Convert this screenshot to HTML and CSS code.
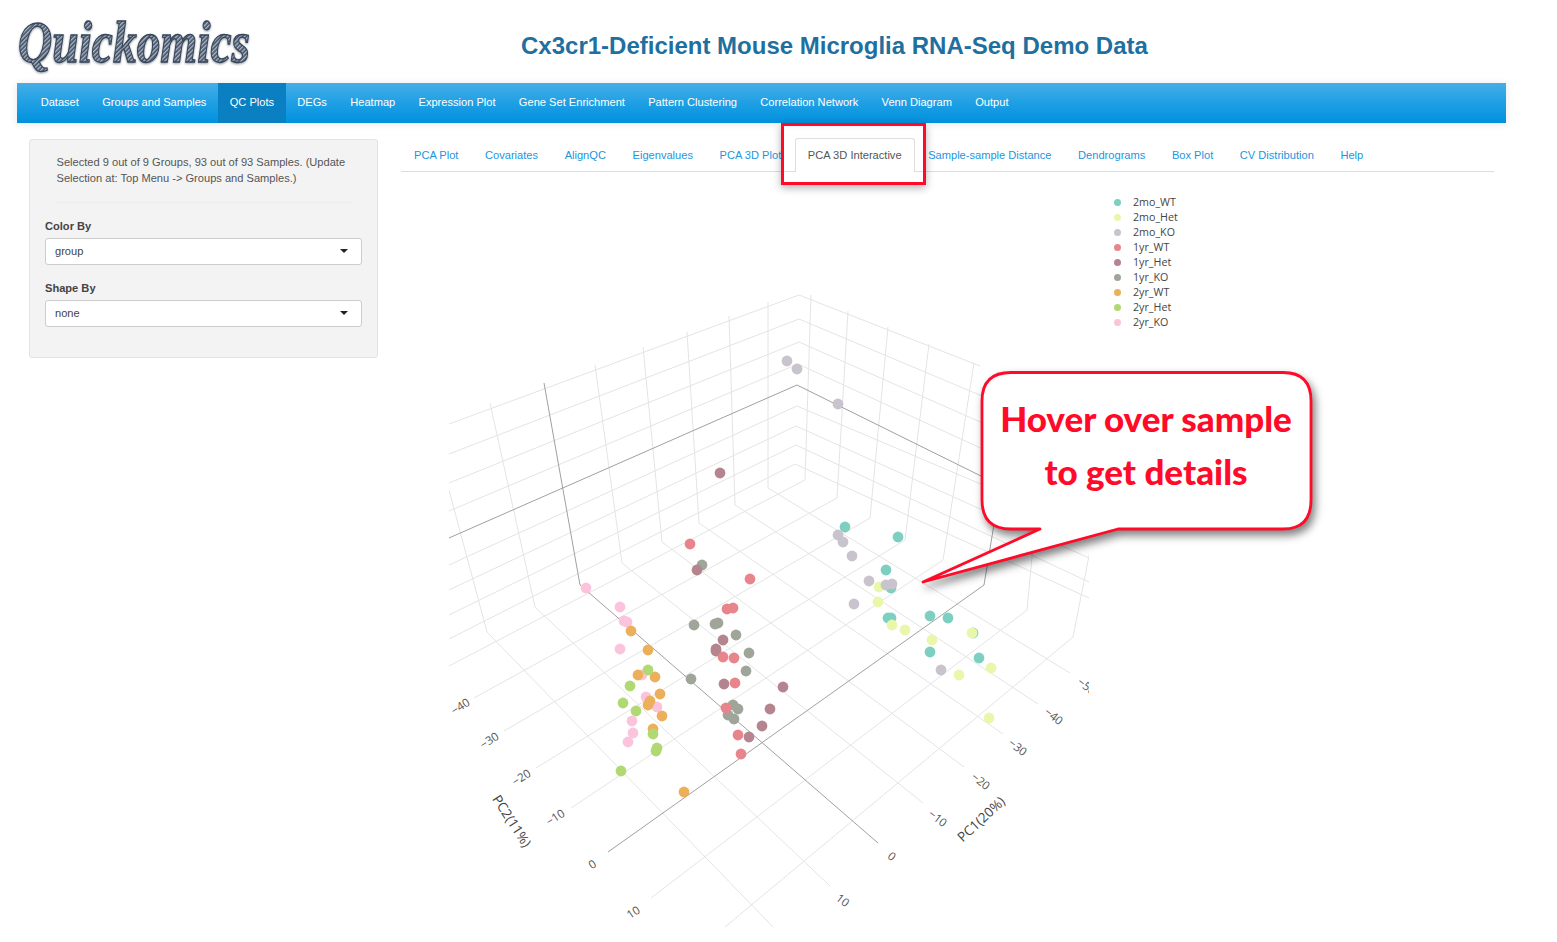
FILE: index.html
```html
<!DOCTYPE html>
<html lang="en">
<head>
<meta charset="utf-8">
<title>Quickomics</title>
<link rel="stylesheet" href="styles.css">
</head>
<body>
<header class="header">
  <svg class="logo" viewBox="0 0 240 83" width="240" height="83">
    <defs>
      <pattern id="weave" width="3" height="3" patternUnits="userSpaceOnUse" patternTransform="rotate(45)">
        <rect width="3" height="3" class="weave-bg"/>
        <rect width="1.4" height="3" class="weave-fg"/>
      </pattern>
    </defs>
    <text class="logo-text" x="1" y="62" fill="url(#weave)" textLength="232" lengthAdjust="spacingAndGlyphs">Quickomics</text>
  </svg>
  <h1 class="title">Cx3cr1-Deficient Mouse Microglia RNA-Seq Demo Data</h1>
</header>
<nav class="navbar">
  <a>Dataset</a><a>Groups and Samples</a><a class="active">QC Plots</a><a>DEGs</a><a>Heatmap</a><a>Expression Plot</a><a>Gene Set Enrichment</a><a>Pattern Clustering</a><a>Correlation Network</a><a>Venn Diagram</a><a>Output</a>
</nav>
<div class="content">
  <aside class="well">
    <p class="note">Selected 9 out of 9 Groups, 93 out of 93 Samples. (Update Selection at: Top Menu -&gt; Groups and Samples.)</p>
    <hr class="rule">
    <label class="field-label">Color By</label>
    <div class="select">group<span class="caret"></span></div>
    <label class="field-label">Shape By</label>
    <div class="select">none<span class="caret"></span></div>
  </aside>
  <main class="main">
    <div class="tabs">
      <a>PCA Plot</a><a>Covariates</a><a>AlignQC</a><a>Eigenvalues</a><a>PCA 3D Plot</a><a class="active">PCA 3D Interactive</a><a>Sample-sample Distance</a><a>Dendrograms</a><a>Box Plot</a><a>CV Distribution</a><a>Help</a>
    </div>
    <div class="red-box"></div>
    <section class="plot">
      <svg class="scene" viewBox="449 172 640 755" width="640" height="755">
        <path class="grid" d="M799 295L449 424M799 319L449 454M799 342L449 483M798 364L449 511M797 406L449 565M796 426L449 590M796 445L449 615M795 464L449 639"/>
        <path class="grid" d="M799 295L980 366M799 319L1089 441M799 342L1089 470M798 364L1089 498M797 406L1089 530M796 426L1089 558M796 445L1089 582M795 464L1089 598"/>
        <path class="grid" d="M449 490L487 632L773 927M490 403L535 607L830 886M595 365L622 563L923 803M643 347L662 542L964 767M687 332L699 523L1003 734M729 316L735 505L1038 704M768 302L768 488L1070 673"/>
        <path class="grid" d="M811 295L805 480L449 666M848 311L837 498L474 698M888 327L870 518L504 731M929 344L905 540L536 768M974 363L943 560L571 808M1045 420L1027 610L651 898M1100 500L1073 637L725 927"/>
        <path class="axis" d="M449 538L797 385L985 478M544 383L580 585L878 843M1017 385L984 585L608 852"/>

        <g class="c-2mo-wt">
          <circle cx="845" cy="527" r="5.4"/><circle cx="898" cy="537" r="5.4"/><circle cx="886" cy="570" r="5.4"/><circle cx="891" cy="588" r="5.4"/><circle cx="888" cy="618" r="5.4"/><circle cx="891" cy="618" r="5.4"/><circle cx="930" cy="616" r="5.4"/><circle cx="948" cy="618" r="5.4"/><circle cx="973" cy="633" r="5.4"/><circle cx="930" cy="652" r="5.4"/><circle cx="979" cy="658" r="5.4"/>
        </g>
        <g class="c-2mo-het">
          <circle cx="879" cy="587" r="5.4"/><circle cx="878" cy="602" r="5.4"/><circle cx="892" cy="625" r="5.4"/><circle cx="905" cy="630" r="5.4"/><circle cx="932" cy="640" r="5.4"/><circle cx="972" cy="633" r="5.4"/><circle cx="959" cy="675" r="5.4"/><circle cx="991" cy="668" r="5.4"/><circle cx="989" cy="718" r="5.4"/>
        </g>
        <g class="c-2mo-ko">
          <circle cx="787" cy="361" r="5.4"/><circle cx="797" cy="369" r="5.4"/><circle cx="838" cy="404" r="5.4"/><circle cx="838" cy="535" r="5.4"/><circle cx="843" cy="542" r="5.4"/><circle cx="852" cy="556" r="5.4"/><circle cx="869" cy="581" r="5.4"/><circle cx="886" cy="585" r="5.4"/><circle cx="892" cy="584" r="5.4"/><circle cx="854" cy="604" r="5.4"/><circle cx="941" cy="670" r="5.4"/>
        </g>
        <g class="c-1yr-ko">
          <circle cx="702" cy="565" r="5.4"/><circle cx="694" cy="625" r="5.4"/><circle cx="715" cy="624" r="5.4"/><circle cx="718" cy="623" r="5.4"/><circle cx="736" cy="635" r="5.4"/><circle cx="749" cy="653" r="5.4"/><circle cx="746" cy="671" r="5.4"/><circle cx="691" cy="679" r="5.4"/><circle cx="733" cy="705" r="5.4"/><circle cx="738" cy="709" r="5.4"/><circle cx="728" cy="715" r="5.4"/><circle cx="734" cy="719" r="5.4"/>
        </g>
        <g class="c-1yr-het">
          <circle cx="720" cy="473" r="5.4"/><circle cx="697" cy="570" r="5.4"/><circle cx="723" cy="640" r="5.4"/><circle cx="716" cy="649" r="5.4"/><circle cx="716" cy="651" r="5.4"/><circle cx="724" cy="684" r="5.4"/><circle cx="783" cy="687" r="5.4"/><circle cx="770" cy="709" r="5.4"/><circle cx="762" cy="726" r="5.4"/><circle cx="749" cy="737" r="5.4"/>
        </g>
        <g class="c-1yr-wt">
          <circle cx="690" cy="544" r="5.4"/><circle cx="750" cy="579" r="5.4"/><circle cx="727" cy="609" r="5.4"/><circle cx="733" cy="608" r="5.4"/><circle cx="723" cy="657" r="5.4"/><circle cx="734" cy="658" r="5.4"/><circle cx="735" cy="683" r="5.4"/><circle cx="726" cy="708" r="5.4"/><circle cx="738" cy="735" r="5.4"/><circle cx="741" cy="754" r="5.4"/>
        </g>
        <g class="c-2yr-ko">
          <circle cx="586" cy="588" r="5.4"/><circle cx="620" cy="607" r="5.4"/><circle cx="624" cy="621" r="5.4"/><circle cx="627" cy="622" r="5.4"/><circle cx="620" cy="649" r="5.4"/><circle cx="642" cy="675" r="5.4"/><circle cx="646" cy="697" r="5.4"/><circle cx="657" cy="707" r="5.4"/><circle cx="632" cy="721" r="5.4"/><circle cx="633" cy="733" r="5.4"/><circle cx="628" cy="742" r="5.4"/>
        </g>
        <g class="c-2yr-wt">
          <circle cx="631" cy="631" r="5.4"/><circle cx="648" cy="650" r="5.4"/><circle cx="638" cy="675" r="5.4"/><circle cx="655" cy="677" r="5.4"/><circle cx="660" cy="694" r="5.4"/><circle cx="650" cy="701" r="5.4"/><circle cx="648" cy="705" r="5.4"/><circle cx="662" cy="716" r="5.4"/><circle cx="653" cy="729" r="5.4"/><circle cx="684" cy="792" r="5.4"/>
        </g>
        <g class="c-2yr-het">
          <circle cx="648" cy="670" r="5.4"/><circle cx="630" cy="686" r="5.4"/><circle cx="623" cy="703" r="5.4"/><circle cx="636" cy="711" r="5.4"/><circle cx="653" cy="734" r="5.4"/><circle cx="657" cy="748" r="5.4"/><circle cx="656" cy="751" r="5.4"/><circle cx="621" cy="771" r="5.4"/>
        </g>

        <g class="ticks">
          <text transform="translate(460 706) rotate(-33)">−40</text>
          <text transform="translate(489 740) rotate(-33)">−30</text>
          <text transform="translate(521 777) rotate(-33)">−20</text>
          <text transform="translate(555 817) rotate(-33)">−10</text>
          <text transform="translate(592 864) rotate(-33)">0</text>
          <text transform="translate(633 912) rotate(-33)">10</text>
          <text transform="translate(1087 686) rotate(38)">−50</text>
          <text transform="translate(1054 716) rotate(38)">−40</text>
          <text transform="translate(1018 747) rotate(38)">−30</text>
          <text transform="translate(981 781) rotate(38)">−20</text>
          <text transform="translate(938 818) rotate(38)">−10</text>
          <text transform="translate(892 856) rotate(38)">0</text>
          <text transform="translate(843 900) rotate(38)">10</text>
        </g>
        <text class="axis-title" transform="translate(512 821) rotate(57)">PC2(11%)</text>
        <text class="axis-title" transform="translate(981 819) rotate(-43)">PC1(20%)</text>
      </svg>
      <ul class="legend">
        <li><span class="dot d-2mo-wt"></span>2mo_WT</li>
        <li><span class="dot d-2mo-het"></span>2mo_Het</li>
        <li><span class="dot d-2mo-ko"></span>2mo_KO</li>
        <li><span class="dot d-1yr-wt"></span>1yr_WT</li>
        <li><span class="dot d-1yr-het"></span>1yr_Het</li>
        <li><span class="dot d-1yr-ko"></span>1yr_KO</li>
        <li><span class="dot d-2yr-wt"></span>2yr_WT</li>
        <li><span class="dot d-2yr-het"></span>2yr_Het</li>
        <li><span class="dot d-2yr-ko"></span>2yr_KO</li>
      </ul>
      <svg class="callout" viewBox="915 365 405 225" width="405" height="225">
        <path class="bubble" d="M1011 372.5H1283Q1311 372.5 1311 401V500Q1311 529 1283 529H1118L923 582L1040 529H1011Q982 529 982 500V401Q982 372.5 1011 372.5Z"/>
        <text class="callout-text" x="1146" y="432">Hover over sample</text>
        <text class="callout-text" x="1146" y="485">to get details</text>
      </svg>
    </section>
  </main>
</div>
</body>
</html>
```
FILE: styles.css
```css
* { box-sizing: border-box; }
html, body { margin: 0; padding: 0; background: #fff; overflow: hidden; }
body { height: 942px; font-family: "Liberation Sans", Arial, sans-serif; font-size: 11.1px; color: #555; }

.header { display: flex; align-items: flex-start; height: 83px; padding-left: 17px; }
.logo { display: block; flex: none; overflow: visible; }
.logo-text { font-family: "Liberation Serif", serif; font-style: italic; font-weight: 700; font-size: 60px; stroke: #38465a; stroke-width: 1.3px; filter: drop-shadow(0 1px 1px rgba(40,50,70,.5)); }
.weave-bg { fill: #3f4e63; }
.weave-fg { fill: #aeb8c6; }
.title { margin: 32px 0 0 264px; font-size: 24px; line-height: 28px; font-weight: 700; color: #1f6f9f; white-space: nowrap; }

.navbar { display: flex; height: 40px; margin: 0 51px 0 17px; padding-left: 12px; background: linear-gradient(#45aee8, #1f9fe4 50%, #0091dd); box-shadow: 0 1px 8px rgba(0,0,0,.1); }
.navbar a { display: block; padding: 0 11.65px; line-height: 39px; color: #fff; white-space: nowrap; }
.navbar a.active { background: #0a7fc2; }

.content { display: flex; align-items: flex-start; padding-left: 29px; }

.well { flex: none; width: 349px; height: 219px; margin-top: 16px; padding: 14px 15px 0; background: #f3f3f3; border: 1px solid #e3e3e3; border-radius: 3px; }
.note { margin: 0; padding: 0 11.5px; line-height: 16px; }
.rule { margin: 16px 10px 0 11.5px; border: 0; border-top: 1px solid #ececec; }
.field-label { display: block; margin: 16px 0 5px; line-height: 14px; font-weight: 700; color: #444; }
.select { position: relative; width: 317px; height: 27px; padding-left: 9px; line-height: 25px; background: #fff; border: 1px solid #ccc; border-radius: 3px; color: #444; }
.caret { position: absolute; right: 13px; top: 10px; border: 4px solid transparent; border-top-color: #222; border-bottom-width: 0; }

.main { position: relative; width: 1093px; margin: 15px 0 0 23px; }
.tabs { display: flex; height: 34px; border-bottom: 1px solid #ddd; }
.tabs a { display: block; height: 34px; margin-right: 0.6px; padding: 0 12px; border: 1px solid transparent; border-bottom: 0; line-height: 32px; color: #2196e0; white-space: nowrap; }
.tabs a.active { background: #fff; border-color: #ddd; border-radius: 3px 3px 0 0; color: #555; }
.red-box { position: absolute; left: 380px; top: -15px; width: 145px; height: 62px; border: 3px solid #ff0a28; box-shadow: 0 3px 8px rgba(0,0,0,.3); }

.plot { position: relative; height: 755px; padding-left: 48px; }
.scene { display: block; overflow: hidden; }
.grid { fill: none; stroke: #e4e4e4; stroke-width: 1; }
.axis { fill: none; stroke: #a0a0a0; stroke-width: 1; }
.ticks text { font-family: "Open Sans", sans-serif; font-size: 11.5px; fill: #555; text-anchor: middle; dominant-baseline: central; }
.axis-title { font-family: "Open Sans", sans-serif; font-size: 13.5px; fill: #444; text-anchor: middle; dominant-baseline: central; }

.c-2mo-wt { fill: #7ccfc1; }
.c-2mo-het { fill: #e9f7aa; }
.c-2mo-ko { fill: #c8c3cc; }
.c-1yr-wt { fill: #e8858c; }
.c-1yr-het { fill: #b4848f; }
.c-1yr-ko { fill: #a0a59a; }
.c-2yr-wt { fill: #ecb05a; }
.c-2yr-het { fill: #b0d973; }
.c-2yr-ko { fill: #fcc3dc; }

.legend { position: absolute; left: 713px; top: 22.5px; margin: 0; padding: 0; list-style: none; font-family: "Open Sans", sans-serif; font-size: 10.7px; color: #444; }
.legend li { display: flex; align-items: center; height: 15px; white-space: nowrap; }
.dot { flex: none; width: 7px; height: 7px; margin-right: 12px; border-radius: 50%; }
.d-2mo-wt { background: #7ccfc1; }
.d-2mo-het { background: #e9f7aa; }
.d-2mo-ko { background: #c8c3cc; }
.d-1yr-wt { background: #e8858c; }
.d-1yr-het { background: #b4848f; }
.d-1yr-ko { background: #a0a59a; }
.d-2yr-wt { background: #ecb05a; }
.d-2yr-het { background: #b0d973; }
.d-2yr-ko { background: #fcc3dc; }

.callout { position: absolute; left: 514px; top: 193px; overflow: visible; }
.bubble { fill: #fff; stroke: #ff0a28; stroke-width: 2.8; stroke-linejoin: round; filter: drop-shadow(3px 5px 4px rgba(0,0,0,.5)); }
.callout-text { font-family: Lato, sans-serif; font-weight: 900; font-size: 35px; fill: #ff0a28; text-anchor: middle; }
```
